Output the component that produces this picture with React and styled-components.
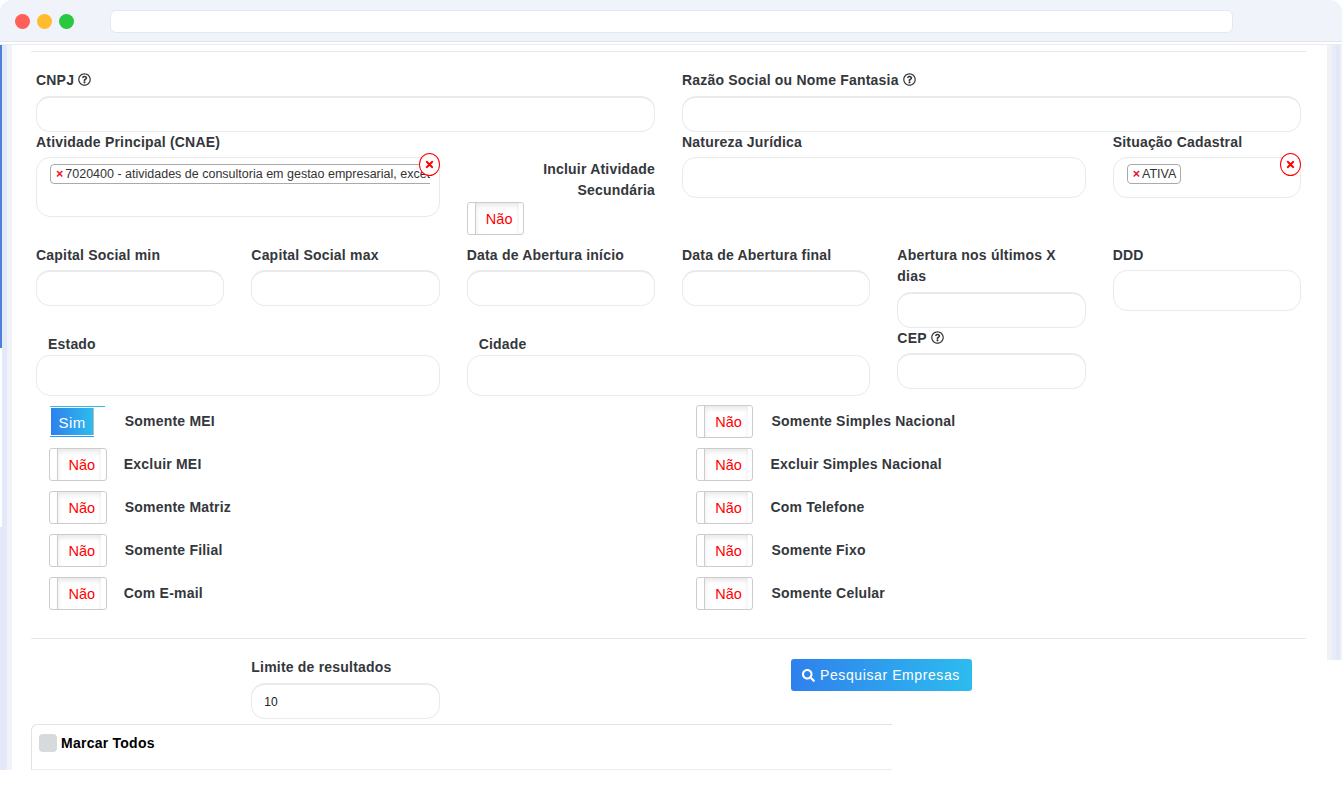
import styled, {createGlobalStyle} from 'styled-components'
import {FaRegQuestionCircle, FaSearch, FaTimes} from 'react-icons/fa'

const leftToggles = [
	{label: 'Somente MEI', on: true},
	{label: 'Excluir MEI', shift: -1},
	{label: 'Somente Matriz'},
	{label: 'Somente Filial'},
	{label: 'Com E-mail', shift: -1},
]

const rightToggles = [
	{label: 'Somente Simples Nacional'},
	{label: 'Excluir Simples Nacional', shift: -1},
	{label: 'Com Telefone', shift: -1},
	{label: 'Somente Fixo'},
	{label: 'Somente Celular'},
]

const Toggle = ({on}) => (
	on
		? <SwitchOn><span>Sim</span></SwitchOn>
		: <SwitchOff><span>Não</span></SwitchOff>
)

const ToggleList = ({items}) => (
	<ToggleColumn>
		{items.map(item => (
			<ToggleRow key={item.label}>
				<Toggle on={item.on} />
				<ToggleLabel $shift={item.shift}>{item.label}</ToggleLabel>
			</ToggleRow>
		))}
	</ToggleColumn>
)

const Help = () => <HelpIcon><FaRegQuestionCircle /></HelpIcon>

const Clear = () => <ClearButton><FaTimes /></ClearButton>

const App = () => {
	return (
		<Page>
			<GlobalStyle />

			<TitleBar>
				<Dots>
					<Dot $color="#ff5f57" />
					<Dot $color="#febc2e" />
					<Dot $color="#28c840" />
				</Dots>

				<Address />
			</TitleBar>

			<Main>
				<LeftRail>
					<RailEdge $height={303} $color="#4d7fdc" />
					<RailEdge $height={179} $color="#fff" />
				</LeftRail>

				<Content>
					<Rule $top={6} />

					<Form>
						<Field $span={6} $top={18}>
							<Label $gap={5}>CNPJ <Help /></Label>
							<Input />
						</Field>

						<Field $span={6} $top={18}>
							<Label $gap={5}>Razão Social ou Nome Fantasia <Help /></Label>
							<Input />
						</Field>
					</Form>

					<Form $height={113}>
						<Field $span={4}>
							<Label>Atividade Principal (CNAE)</Label>
							<Select $height={60}>
								<TagClip>
									<Tag $open>
										<TagX>×</TagX>7020400 - atividades de consultoria em gestao empresarial, exceto
									</Tag>
								</TagClip>
								<Clear />
							</Select>
						</Field>

						<SecondaryField>
							<SecondaryLabel>Incluir Atividade Secundária</SecondaryLabel>
							<Toggle />
						</SecondaryField>

						<Field $span={4}>
							<Label>Natureza Jurídica</Label>
							<Select $height={41} />
						</Field>

						<Field $span={2}>
							<Label>Situação Cadastral</Label>
							<Select $height={41}>
								<Tag>
									<TagX>×</TagX>ATIVA
								</Tag>
								<Clear />
							</Select>
						</Field>
					</Form>

					<Form $height={83}>
						<Field $span={2}>
							<Label>Capital Social min</Label>
							<Input />
						</Field>

						<Field $span={2}>
							<Label>Capital Social max</Label>
							<Input />
						</Field>

						<Field $span={2}>
							<Label>Data de Abertura início</Label>
							<Input />
						</Field>

						<Field $span={2}>
							<Label>Data de Abertura final</Label>
							<Input />
						</Field>

						<Field $span={2}>
							<Label $gap={5}>Abertura nos últimos X dias</Label>
							<Input />
						</Field>

						<Field $span={2}>
							<Label>DDD</Label>
							<Select $height={41} />
						</Field>
					</Form>

					<Form>
						<Field $span={4} $top={6}>
							<Label $gap={0} $indent={12}>Estado</Label>
							<Select $height={41} />
						</Field>

						<Field $span={4} $top={6}>
							<Label $gap={0} $indent={12}>Cidade</Label>
							<Select $height={41} />
						</Field>

						<Field $span={2}>
							<Label>CEP <Help /></Label>
							<Input />
						</Field>
					</Form>

					<Toggles>
						<ToggleList items={leftToggles} />
						<ToggleList items={rightToggles} />
					</Toggles>

					<Rule $top={29} />

					<Form>
						<Field $span={2} $start={3} $top={18}>
							<Label $gap={5}>Limite de resultados</Label>
							<Input defaultValue="10" />
						</Field>

						<ButtonCell>
							<SearchButton><FaSearch /> Pesquisar Empresas</SearchButton>
						</ButtonCell>
					</Form>

					<ResultBox>
						<CheckAll>
							<Check />
							Marcar Todos
						</CheckAll>
					</ResultBox>
				</Content>

				<RightRail>
					<RailStripe $width={5} $color="#f0f2f8" />
					<RailStripe $width={4} $color="#e9ecf7" />
					<RailStripe $width={4} $color="#e3e8f8" />
					<RailStripe $width={3} $color="#eef1fa" />
				</RightRail>
			</Main>
		</Page>
	)
}

export default App

const GlobalStyle = createGlobalStyle`
	html, body{
		margin: 0;
		background: #fff;
	}

	*{
		box-sizing: border-box;
	}
`

const Page = styled.div`
	display: flex;
	flex-direction: column;
	width: 1342px;
	height: 790px;
	overflow: hidden;
	background: #fff;
	font-family: "Liberation Sans", Arial, sans-serif;
	color: #34373c;
`

const TitleBar = styled.header`
	display: flex;
	align-items: center;
	flex: none;
	height: 42px;
	padding: 2px 109px 0 15px;
	background: #f0f3f9;
	border-bottom: 1px solid #e2e6ef;
	border-radius: 12px 12px 0 0;
`

const Dots = styled.div`
	display: flex;
	gap: 7px;
	width: 95px;
	flex: none;
`

const Dot = styled.span`
	width: 15px;
	height: 15px;
	border-radius: 50%;
	background: ${props => props.$color};
`

const Address = styled.div`
	flex: 1;
	height: 23px;
	background: #fff;
	border: 1px solid #e2e8f0;
	border-radius: 6px;
`

const Main = styled.div`
	display: flex;
	align-items: flex-start;
	flex: none;
	height: 726px;
	margin-top: 2px;
	border-top: 1px solid #e9ecf2;
`

const LeftRail = styled.div`
	flex: none;
	width: 12px;
	height: 100%;
	background: linear-gradient(90deg, #e4e9f8 0, #e4e9f8 7px, #f2f3f8 7px, #f2f3f8 12px);
`

const RailEdge = styled.div`
	width: 2px;
	height: ${props => props.$height}px;
	background: ${props => props.$color};
`

const Content = styled.main`
	flex: none;
	width: 1315px;
	height: 100%;
	padding: 0 21px 0 19px;
`

const Rule = styled.div`
	height: 1px;
	margin-top: ${props => props.$top}px;
	background: #e6e8ea;
`

const Form = styled.div`
	display: grid;
	grid-template-columns: repeat(12, 1fr);
	column-gap: 27px;
	align-items: start;
	height: ${props => props.$height ? props.$height + 'px' : 'auto'};
	padding: 0 5px;
`

const Field = styled.div`
	grid-column: ${props => props.$start || 'auto'} / span ${props => props.$span};
	margin-top: ${props => props.$top || 0}px;
`

const Label = styled.label`
	display: block;
	margin-bottom: ${props => props.$gap ?? 4}px;
	padding-left: ${props => props.$indent || 0}px;
	font-size: 14px;
	font-weight: 700;
	line-height: 21px;
	letter-spacing: 0.2px;
`

const HelpIcon = styled.span`
	display: inline-block;
	font-size: 13px;
	line-height: 1;
	vertical-align: -1px;
`

const Input = styled.input`
	display: block;
	width: 100%;
	height: 36px;
	padding: 0 12px;
	background: #fff;
	border: 1px solid #e9eaec;
	border-top-width: 2px;
	border-radius: 14px;
	outline: none;
	font: 12px "Liberation Sans", Arial, sans-serif;
	color: #222;
`

const Select = styled.div`
	position: relative;
	height: ${props => props.$height}px;
	padding: 6px 9px 0 13px;
	background: #fff;
	border: 1px solid #e9eaec;
	border-radius: 14px;
`

const TagClip = styled.div`
	overflow: hidden;
`

const Tag = styled.span`
	display: ${props => props.$open ? 'block' : 'inline-block'};
	width: ${props => props.$open ? '440px' : 'auto'};
	height: 20px;
	padding: 0 4px 0 5px;
	background: #fff;
	border: 1px solid #aaa;
	border-radius: 4px;
	font-size: 12.5px;
	line-height: 18px;
	white-space: nowrap;
	color: #333;
`

const TagX = styled.span`
	margin-right: 2px;
	font-weight: 700;
	color: #e8112d;
`

const ClearButton = styled.span`
	position: absolute;
	top: -5px;
	right: -1px;
	display: flex;
	align-items: center;
	justify-content: center;
	width: 21px;
	height: 23px;
	background: #fff;
	border: 1px solid #f00;
	border-radius: 50%;
	font-size: 11px;
	color: #f00;
`

const SecondaryField = styled.div`
	grid-column: span 2;
	padding-top: 27px;
`

const SecondaryLabel = styled.div`
	text-align: right;
	font-size: 14px;
	font-weight: 700;
	line-height: 21px;
	letter-spacing: 0.2px;
`

const Toggles = styled.div`
	display: grid;
	grid-template-columns: 646.7px 1fr;
	margin-top: 9px;
	padding: 0 5px 0 18.3px;
`

const ToggleColumn = styled.div`
	display: flex;
	flex-direction: column;
	gap: 11px;
`

const ToggleRow = styled.div`
	display: flex;
	align-items: center;
	gap: 18px;
	height: 32px;
`

const ToggleLabel = styled.span`
	margin-left: ${props => props.$shift || 0}px;
	font-size: 14px;
	font-weight: 700;
	letter-spacing: 0.2px;
`

const SwitchOff = styled.div`
	flex: none;
	width: 57.5px;
	height: 33px;
	margin-top: 1px;
	padding-left: 7px;
	background: #fff;
	border: 1px solid #ccc;
	border-radius: 3px;

	span{
		display: block;
		width: 44px;
		height: 100%;
		border-left: 1px solid #ccc;
		box-shadow: inset 0 3px 5px rgba(0, 0, 0, 0.09);
		text-align: center;
		padding-left: 4px;
		font-size: 14.5px;
		line-height: 32px;
		color: #f00;
	}
`

const SwitchOn = styled.div`
	flex: none;
	position: relative;
	width: 57.5px;
	height: 32px;
	padding: 3px 13px 0 2px;

	&::before{
		content: '';
		position: absolute;
		top: 1px;
		left: 1px;
		width: 55px;
		height: 1px;
		background: #2dbcee;
	}

	&::after{
		content: '';
		position: absolute;
		left: 1px;
		bottom: 0;
		width: 44px;
		height: 1px;
		background: #2f9bee;
	}

	span{
		display: block;
		height: 27px;
		background: linear-gradient(90deg, #2f80ed, #2dbcee);
		border-right: 1px solid #bbb;
		text-align: center;
		font-size: 15px;
		letter-spacing: 0.4px;
		line-height: 29px;
		color: #fff;
	}
`

const ButtonCell = styled.div`
	grid-column: 7 / span 6;
	margin-top: 20px;
	padding-left: 109px;
`

const SearchButton = styled.button`
	display: flex;
	align-items: center;
	gap: 5px;
	width: 181px;
	height: 32px;
	padding: 0 0 0 11px;
	background: linear-gradient(90deg, #2f80ed, #2dbcee);
	border: none;
	border-radius: 3px;
	font: 14px "Liberation Sans", Arial, sans-serif;
	letter-spacing: 0.6px;
	color: #fff;

	svg{
		font-size: 13px;
	}
`

const ResultBox = styled.section`
	width: 861px;
	height: 46px;
	margin-top: 5px;
	padding: 9px 7px 0;
	background: #fff;
	border: 1px solid #e0e2e4;
	border-right: none;
	border-bottom-color: #ebedef;
	border-radius: 6px 0 0 0;
`

const CheckAll = styled.label`
	display: flex;
	align-items: center;
	gap: 4px;
	font-size: 14px;
	font-weight: 700;
	letter-spacing: 0.25px;
	color: #000;
`

const Check = styled.span`
	width: 18px;
	height: 18px;
	background: #d6dadd;
	border-radius: 4px;
`

const RightRail = styled.div`
	display: flex;
	flex: none;
	width: 15px;
	height: 615px;
`

const RailStripe = styled.span`
	flex: none;
	width: ${props => props.$width}px;
	background: ${props => props.$color};
`
